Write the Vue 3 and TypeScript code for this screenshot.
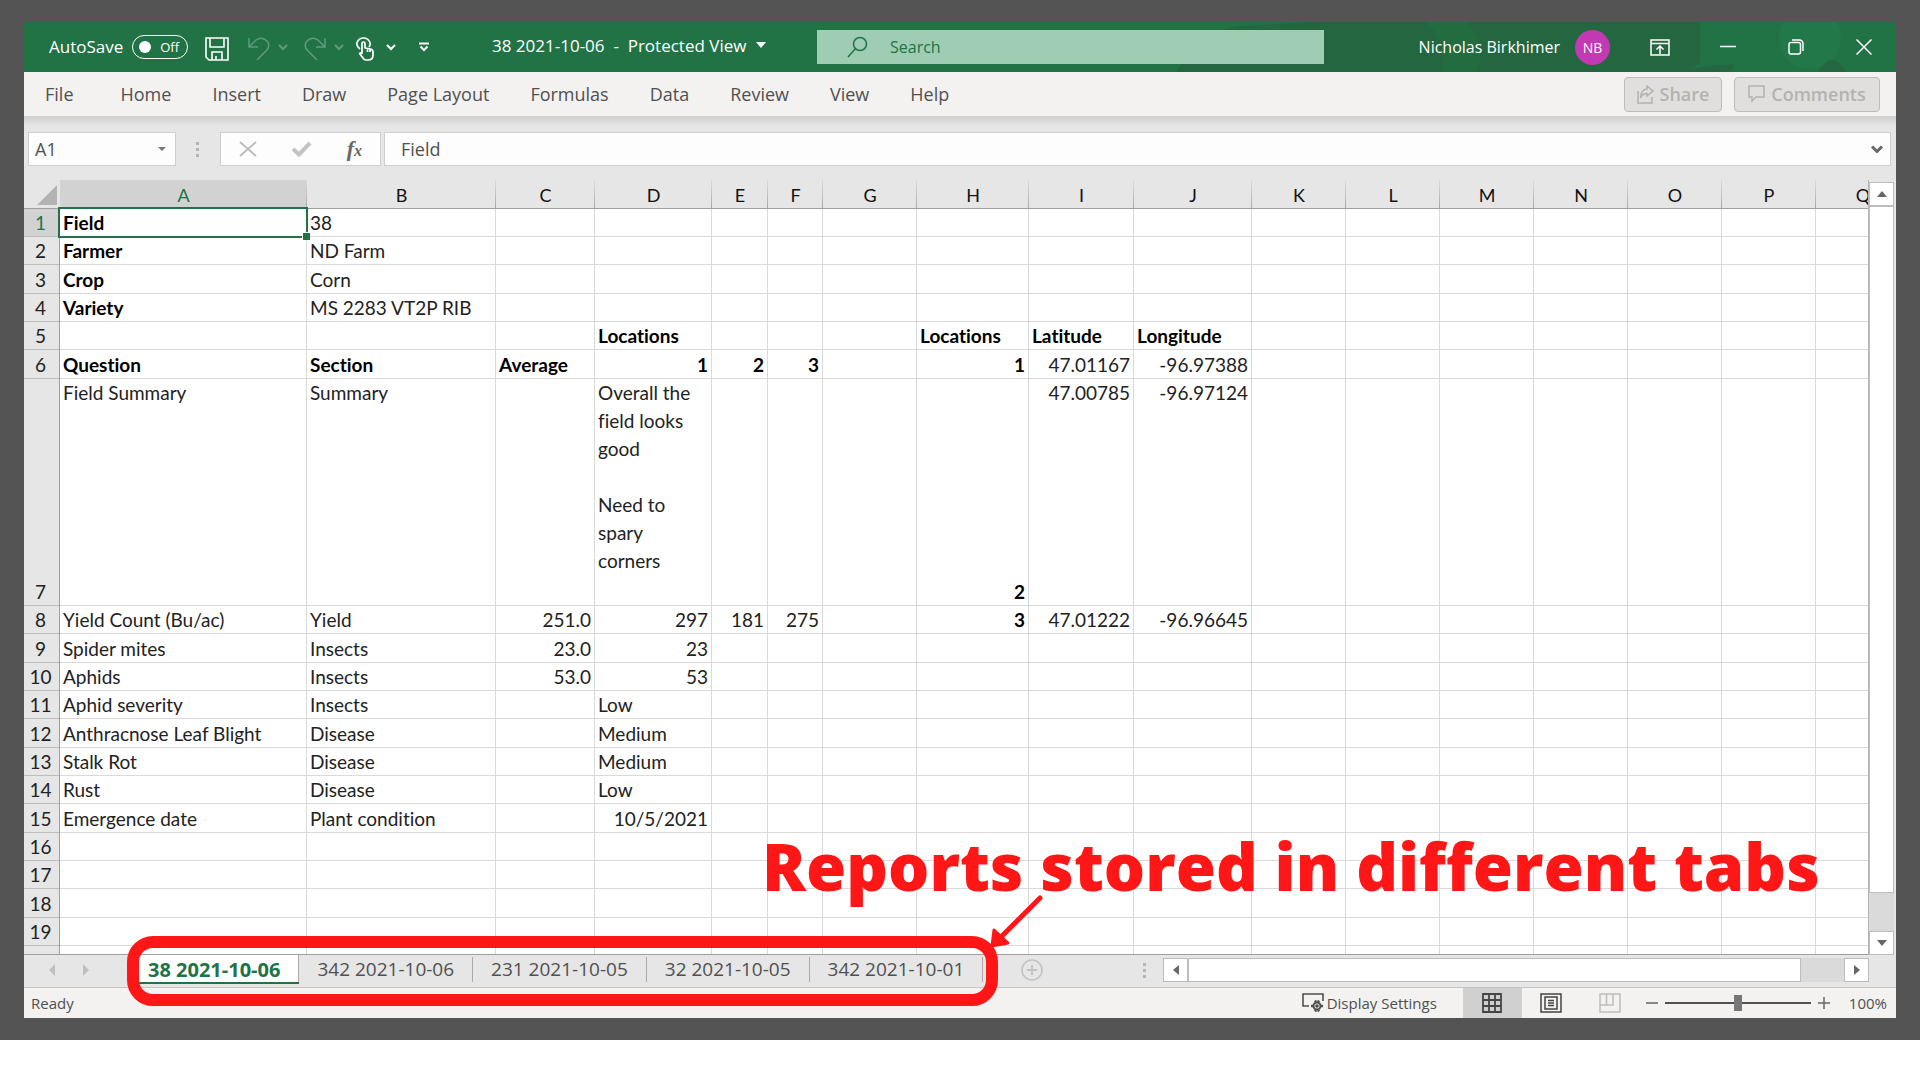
<script setup lang="ts">
import { ref } from 'vue'

interface Cell {
  text: string
  bold?: boolean
  right?: boolean
  bottom?: boolean
}

const columns = ['A', 'B', 'C', 'D', 'E', 'F', 'G', 'H', 'I', 'J', 'K', 'L', 'M', 'N', 'O', 'P', 'Q']
const widths = [247, 189, 99, 117, 56, 55, 94, 112, 105, 118, 94, 94, 94, 94, 94, 94, 94]

const t = (text: string): Cell => ({ text })
const b = (text: string): Cell => ({ text, bold: true })
const n = (text: string): Cell => ({ text, right: true })
const bn = (text: string): Cell => ({ text, bold: true, right: true })

const data: Record<number, Record<string, Cell>> = {
  1: { A: b('Field'), B: t('38') },
  2: { A: b('Farmer'), B: t('ND Farm') },
  3: { A: b('Crop'), B: t('Corn') },
  4: { A: b('Variety'), B: t('MS 2283 VT2P RIB') },
  5: { D: b('Locations'), H: b('Locations'), I: b('Latitude'), J: b('Longitude') },
  6: {
    A: b('Question'), B: b('Section'), C: b('Average'), D: bn('1'), E: bn('2'), F: bn('3'),
    H: bn('1'), I: n('47.01167'), J: n('-96.97388'),
  },
  7: {
    A: t('Field Summary'), B: t('Summary'),
    D: t('Overall the\nfield looks\ngood\n\nNeed to\nspary\ncorners'),
    H: { text: '2', bold: true, right: true, bottom: true },
    I: n('47.00785'), J: n('-96.97124'),
  },
  8: {
    A: t('Yield Count (Bu/ac)'), B: t('Yield'), C: n('251.0'), D: n('297'), E: n('181'), F: n('275'),
    H: bn('3'), I: n('47.01222'), J: n('-96.96645'),
  },
  9: { A: t('Spider mites'), B: t('Insects'), C: n('23.0'), D: n('23') },
  10: { A: t('Aphids'), B: t('Insects'), C: n('53.0'), D: n('53') },
  11: { A: t('Aphid severity'), B: t('Insects'), D: t('Low') },
  12: { A: t('Anthracnose Leaf Blight'), B: t('Disease'), D: t('Medium') },
  13: { A: t('Stalk Rot'), B: t('Disease'), D: t('Medium') },
  14: { A: t('Rust'), B: t('Disease'), D: t('Low') },
  15: { A: t('Emergence date'), B: t('Plant condition'), D: n('10/5/2021') },
}

const menu = ['File', 'Home', 'Insert', 'Draw', 'Page Layout', 'Formulas', 'Data', 'Review', 'View', 'Help']
const sheets = ['38 2021-10-06', '342 2021-10-06', '231 2021-10-05', '32 2021-10-05', '342 2021-10-01']

const activeSheet = ref(0)
const autoSave = ref(false)
const search = ref('')
const cellName = ref('A1')
const formula = ref('Field')
const zoom = ref(50)
</script>

<template>
  <div class="backdrop">
    <main class="window">
      <header class="titlebar">
        <svg class="pattern" viewBox="0 0 780 50" preserveAspectRatio="xMaxYMid slice" aria-hidden="true">
          <path d="M60 50Q70 32 90 22Q100 4 130 4L190 0H584V50Z" fill="#246640" />
          <path d="M310 0Q330 18 326 50H360Q372 30 352 0Z" fill="#22703f" opacity=".6" />
          <path d="M610 0Q606 30 570 50H780V0Z" fill="#217346" />
          <circle cx="694" cy="16" r="31" fill="#23784a" />
          <path d="M560 50Q585 44 617 42Q618 48 612 50ZM702 50Q716 26 730 50Z" fill="#246640" />
        </svg>

        <div class="quick">
          <label class="autosave">
            <span class="autosave-name">AutoSave</span>
            <input v-model="autoSave" type="checkbox" />
            <span class="switch"><i></i>Off</span>
          </label>
          <button type="button" class="save" aria-label="Save">
            <svg width="24" height="24" viewBox="0 0 24 24" fill="none" stroke="#fff" stroke-width="1.6">
              <path d="M1 1H23V23H4L1 20ZM5 1V10H19V1M7 23V15H17V23M11 19V23" />
            </svg>
          </button>
          <button type="button" class="undo dim" aria-label="Undo">
            <svg width="22" height="24" viewBox="0 0 22 24" fill="none" stroke="#fff" stroke-width="1.5">
              <path d="M1 1V10H10M1 10L8 3Q14 -1 19 4Q23 9 18 14L9 23" />
            </svg>
          </button>
          <button type="button" class="more dim" aria-label="Undo list">
            <svg width="12" height="8" viewBox="0 0 12 8" fill="none" stroke="#fff" stroke-width="2"><path d="M2 2L6 6L10 2" /></svg>
          </button>
          <button type="button" class="redo dim" aria-label="Redo">
            <svg width="22" height="24" viewBox="0 0 22 24" fill="none" stroke="#fff" stroke-width="1.5">
              <path d="M21 1V10H12M21 10L14 3Q8 -1 3 4Q-1 9 4 14L13 23" />
            </svg>
          </button>
          <button type="button" class="more dim" aria-label="Redo list">
            <svg width="12" height="8" viewBox="0 0 12 8" fill="none" stroke="#fff" stroke-width="2"><path d="M2 2L6 6L10 2" /></svg>
          </button>
          <button type="button" class="touch" aria-label="Touch mode">
            <svg width="18" height="24" viewBox="0 0 18 24" fill="none" stroke="#fff" stroke-width="1.7" stroke-linejoin="round">
              <path d="M4 12Q0 9 1 5.500Q3 1 7.500 1Q12 1 14 5.500Q14.500 8 13 10" />
              <path d="M6 17V6.500Q6 5 7.500 5Q9 5 9 6.500V11L14.500 12Q17 12.500 17 15V18Q17 23 12 23H10Q8 23 7 21L3.500 16.500Q5 15 6 17M11.500 11.500V15M14 12V15" />
            </svg>
          </button>
          <button type="button" class="more touch-more" aria-label="Touch mode list">
            <svg width="12" height="8" viewBox="0 0 12 8" fill="none" stroke="#fff" stroke-width="2"><path d="M2 2L6 6L10 2" /></svg>
          </button>
          <button type="button" class="customize" aria-label="Customize toolbar">
            <svg width="12" height="10" viewBox="0 0 12 10" fill="none" stroke="#fff" stroke-width="2"><path d="M1 1.500H11M2.500 4.500L6 8L9.500 4.500" /></svg>
          </button>
        </div>

        <button type="button" class="doc">
          <span>38 2021-10-06&nbsp; -&nbsp; Protected View</span>
          <svg width="10" height="6" viewBox="0 0 10 6" fill="#fff"><path d="M0 0H10L5 6Z" /></svg>
        </button>

        <label class="search">
          <svg width="21" height="22" viewBox="0 0 21 22" fill="none" stroke="#217346" stroke-width="1.5">
            <circle cx="13" cy="8" r="6.500" /><path d="M8.500 12.500L1 21" />
          </svg>
          <input v-model="search" type="text" placeholder="Search" aria-label="Search" />
        </label>

        <div class="account">
          <span class="user">Nicholas Birkhimer</span>
          <span class="avatar">NB</span>
          <button type="button" class="win" aria-label="Ribbon display options">
            <svg width="20" height="17" viewBox="0 0 20 17" fill="none" stroke="#fff" stroke-width="1.500"><path d="M1 1H19V16H1ZM1 4.500H19M10 15V7.500M6.500 10.500L10 7L13.500 10.500" /></svg>
          </button>
          <button type="button" class="win" aria-label="Minimize">
            <svg width="16" height="16" viewBox="0 0 16 16" fill="none" stroke="#fff" stroke-width="1.500"><path d="M0 7.500H16" /></svg>
          </button>
          <button type="button" class="win" aria-label="Restore">
            <svg width="16" height="16" viewBox="0 0 16 16" fill="none" stroke="#fff" stroke-width="1.500"><rect x="1" y="3.500" width="11.500" height="11.500" rx="2" /><path d="M4 1H11Q15 1 15 5V12" /></svg>
          </button>
          <button type="button" class="win" aria-label="Close">
            <svg width="16" height="16" viewBox="0 0 16 16" fill="none" stroke="#fff" stroke-width="1.500"><path d="M.5 .5L15.500 15.500M15.500 .5L.5 15.500" /></svg>
          </button>
        </div>
      </header>

      <nav class="ribbon">
        <button v-for="item in menu" :key="item" type="button" class="menu-item">{{ item }}</button>
        <button type="button" class="action share" disabled>
          <svg width="17" height="19" viewBox="0 0 17 19" fill="none" stroke="#b4b2b0" stroke-width="1.500"><path d="M1 6V18H15V12M10 1L16 6L10 11V8.500Q6 8 3.500 13Q4 4.500 10 4Z" /></svg>
          Share
        </button>
        <button type="button" class="action comments" disabled>
          <svg width="17" height="18" viewBox="0 0 17 18" fill="none" stroke="#b4b2b0" stroke-width="1.500"><path d="M1 1H16V12H8L4 16V12H1Z" /></svg>
          Comments
        </button>
      </nav>

      <section class="formula-row">
        <div class="name-box">
          <input v-model="cellName" type="text" aria-label="Name box" />
          <button type="button" aria-label="Named ranges"><svg width="8" height="4" viewBox="0 0 8 4" fill="#777"><path d="M0 0H8L4 4Z" /></svg></button>
        </div>
        <span class="dots"><i></i><i></i><i></i></span>
        <div class="fx-box">
          <button type="button" aria-label="Cancel"><svg width="18" height="16" viewBox="0 0 18 16" fill="none" stroke="#bdbdbd" stroke-width="2"><path d="M1 1L17 15M17 1L1 15" /></svg></button>
          <button type="button" aria-label="Enter"><svg width="20" height="16" viewBox="0 0 20 16" fill="none" stroke="#c4c4c4" stroke-width="4"><path d="M1 8L7 13.500L18 2" /></svg></button>
          <button type="button" class="fx" aria-label="Insert function">f<small>x</small></button>
        </div>
        <div class="formula">
          <input v-model="formula" type="text" aria-label="Formula" />
          <button type="button" aria-label="Expand formula bar"><svg width="12" height="9" viewBox="0 0 12 9" fill="none" stroke="#666" stroke-width="3"><path d="M1 1.500L6 6.500L11 1.500" /></svg></button>
        </div>
      </section>

      <section class="body">
        <div class="pane">
          <table class="grid">
            <colgroup>
              <col class="corner-col" />
              <col v-for="(w, i) in widths" :key="i" :style="{ width: w + 'px' }" />
            </colgroup>
            <thead>
              <tr>
                <td class="corner"><svg width="20" height="20" viewBox="0 0 20 20" fill="#b3b3b3"><path d="M20 0V20H0Z" /></svg></td>
                <th v-for="c in columns" :key="c" scope="col" :class="{ on: c === 'A' }">{{ c }}</th>
              </tr>
            </thead>
            <tbody>
              <tr v-for="r in 19" :key="r" :class="{ summary: r === 7 }">
                <th scope="row" :class="{ on: r === 1 }">{{ r }}</th>
                <td
                  v-for="c in columns"
                  :key="c"
                  :class="{
                    bold: data[r]?.[c]?.bold,
                    right: data[r]?.[c]?.right,
                    bottom: data[r]?.[c]?.bottom,
                    selected: r === 1 && c === 'A',
                  }"
                >{{ data[r]?.[c]?.text }}</td>
              </tr>
              <tr class="partial">
                <th></th>
                <td v-for="c in columns" :key="c"></td>
              </tr>
            </tbody>
          </table>
          <p class="callout">Reports stored in different tabs</p>
          <svg class="arrow" width="56" height="56" viewBox="0 0 56 56" aria-hidden="true">
            <path d="M51 5L12 44" stroke="#ff1616" stroke-width="5" stroke-linecap="round" />
            <path d="M3 53L5 37L19 50Z" fill="#ff1616" stroke="#ff1616" stroke-width="3" stroke-linejoin="round" />
          </svg>
        </div>
        <div class="vscroll">
          <button type="button" aria-label="Scroll up"><svg width="10" height="6" viewBox="0 0 10 6" fill="#666"><path d="M0 6H10L5 0Z" /></svg></button>
          <span class="thumb"></span>
          <span class="track"></span>
          <button type="button" aria-label="Scroll down"><svg width="10" height="6" viewBox="0 0 10 6" fill="#666"><path d="M0 0H10L5 6Z" /></svg></button>
        </div>
      </section>

      <section class="sheet-bar">
        <button type="button" class="step" aria-label="Previous sheet"><svg width="6" height="12" viewBox="0 0 6 12" fill="#bfbfbf"><path d="M6 0V12L0 6Z" /></svg></button>
        <button type="button" class="step" aria-label="Next sheet"><svg width="6" height="12" viewBox="0 0 6 12" fill="#bfbfbf"><path d="M0 0V12L6 6Z" /></svg></button>
        <div class="tabs">
          <button
            v-for="(s, i) in sheets"
            :key="s"
            type="button"
            class="tab"
            :class="{ active: i === activeSheet }"
            @click="activeSheet = i"
          ><span>{{ s }}</span></button>
        </div>
        <button type="button" class="add" aria-label="New sheet">
          <svg width="22" height="22" viewBox="0 0 22 22" fill="none" stroke="#c2c2c2" stroke-width="1.500"><circle cx="11" cy="11" r="10" /><path d="M6 11H16M11 6V16" stroke-width="2" /></svg>
        </button>
        <span class="dots"><i></i><i></i><i></i></span>
        <div class="hscroll">
          <button type="button" aria-label="Scroll left"><svg width="6" height="10" viewBox="0 0 6 10" fill="#666"><path d="M6 0V10L0 5Z" /></svg></button>
          <span class="thumb"></span>
          <span class="track"></span>
          <button type="button" aria-label="Scroll right"><svg width="6" height="10" viewBox="0 0 6 10" fill="#666"><path d="M0 0V10L6 5Z" /></svg></button>
        </div>
      </section>

      <footer class="status">
        <span class="ready">Ready</span>
        <button type="button" class="display">
          <svg width="22" height="20" viewBox="0 0 22 20" fill="none" stroke="#505050" stroke-width="1.600">
            <path d="M7 13H1V1H21V8" />
            <circle cx="15" cy="13" r="3.500" stroke-width="2" /><circle cx="15" cy="13" r="1" fill="#505050" />
            <path d="M13 7.500L14 9M17 7.500L16 9M13 18.500L14 17M17 18.500L16 17M9 13H11.500M18.500 13H21" stroke-width="2.400" />
          </svg>
          Display Settings
        </button>
        <button type="button" class="view current" aria-label="Normal view">
          <svg width="20" height="20" viewBox="0 0 20 20" fill="none" stroke="#444" stroke-width="1.800"><path d="M1 1H19V19H1ZM1 7H19M1 13H19M7 1V19M13 1V19" /></svg>
        </button>
        <button type="button" class="view" aria-label="Page layout view">
          <svg width="22" height="20" viewBox="0 0 22 20" fill="none" stroke="#444" stroke-width="1.500"><path d="M1 1H21V19H1ZM5 4H17V16H5ZM8 7.500H14M8 10H14M8 12.500H14" /></svg>
        </button>
        <button type="button" class="view" aria-label="Page break view">
          <svg width="22" height="20" viewBox="0 0 22 20" fill="none" stroke="#bdbdbd" stroke-width="1.500"><path d="M1 1H21V19H1ZM1 12H14V1M7.500 1V12" /></svg>
        </button>
        <div class="zoom">
          <button type="button" aria-label="Zoom out"><svg width="12" height="12" viewBox="0 0 12 12" stroke="#666" stroke-width="1.500"><path d="M0 6H12" /></svg></button>
          <input v-model="zoom" type="range" min="0" max="100" aria-label="Zoom" />
          <button type="button" aria-label="Zoom in"><svg width="12" height="12" viewBox="0 0 12 12" stroke="#666" stroke-width="1.500"><path d="M0 6H12M6 0V12" /></svg></button>
        </div>
        <span class="percent">100%</span>
      </footer>
    </main>
  </div>
</template>

<style>
body {
  margin: 0;
  background: #fff;
}
</style>

<style scoped>
.backdrop {
  padding: 22px 24px;
  background: #545454;
  font-family: 'Open Sans', 'Noto Sans', sans-serif;
  font-size: 18px;
  font-variant-ligatures: none;
  color: #505050;
}
* {
  box-sizing: border-box;
}
button,
input {
  margin: 0;
  padding: 0;
  border: 0;
  background: none;
  font: inherit;
  color: inherit;
  min-width: 0;
}
input:focus {
  outline: none;
}
button {
  display: flex;
  align-items: center;
  justify-content: center;
  white-space: nowrap;
}
svg {
  display: block;
  flex: none;
}
.window {
  background: #e6e6e6;
}

/* Title bar */
.titlebar {
  position: relative;
  display: grid;
  grid-template-columns: 468px 325px minmax(0, 507px) minmax(0, 1fr);
  align-items: center;
  height: 50px;
  overflow: hidden;
  background: #217346;
  color: #fff;
  font-size: 16px;
}
.pattern {
  position: absolute;
  top: 0;
  right: 0;
  width: 780px;
  height: 50px;
}
.quick,
.doc,
.search,
.account {
  position: relative;
}
.quick {
  display: flex;
  align-items: center;
  padding-left: 25px;
}
.autosave {
  display: flex;
  align-items: center;
}
.autosave-name {
  width: 83px;
  padding-bottom: 2px;
  font-size: 17px;
}
.autosave input {
  position: absolute;
  opacity: 0;
}
.switch {
  display: flex;
  align-items: center;
  justify-content: space-between;
  width: 56px;
  height: 24px;
  padding: 0 8px 0 6px;
  border: 1px solid #fff;
  border-radius: 12px;
  font-size: 13px;
}
.switch i {
  width: 12px;
  height: 12px;
  border-radius: 50%;
  background: #fff;
}
.save,
.undo,
.redo,
.touch {
  padding-top: 4px;
}
.save {
  margin-left: 17px;
}
.undo {
  margin-left: 19px;
}
.more {
  margin-left: 7px;
}
.redo {
  margin-left: 15px;
}
.dim {
  opacity: .28;
}
.touch,
.touch-more {
  margin-left: 11px;
}
.customize {
  margin-left: 21px;
}
.doc {
  justify-content: flex-start;
  gap: 10px;
  padding-bottom: 4px;
  font-size: 17px;
}
.search {
  display: flex;
  align-items: center;
  gap: 22px;
  height: 34px;
  padding-left: 30px;
  background: #9fcdb3;
}
.search input {
  flex: 1;
  color: #217346;
}
.search input::placeholder {
  color: #217346;
  opacity: 1;
}
.account {
  display: flex;
  align-items: center;
  justify-content: flex-end;
  white-space: nowrap;
}
.avatar {
  width: 35px;
  height: 35px;
  margin: 0 14px 0 15px;
  border-radius: 50%;
  background: #c239b3;
  font-size: 14px;
  line-height: 35px;
  text-align: center;
}
.win {
  flex: none;
  width: 68px;
  height: 50px;
  padding-left: 4px;
}

/* Ribbon tabs */
.ribbon {
  display: flex;
  align-items: center;
  gap: 41px;
  height: 44px;
  padding: 0 16px 0 21px;
  background: #f3f2f1;
}
.menu-item:first-child {
  margin-right: 6px;
}
.action {
  gap: 6px;
  height: 35px;
  border: 1px solid #bebcba;
  border-radius: 4px;
  background: #e1dfdd;
  color: #b4b2b0;
  font-weight: 600;
}
.share {
  width: 98px;
  margin-left: auto;
}
.comments {
  width: 146px;
  margin-left: -29px;
}

/* Formula bar */
.formula-row {
  display: flex;
  align-items: center;
  height: 64px;
  padding: 2px 5px 0 4px;
  background: linear-gradient(#cfcfcf, #e6e6e6 10px);
}
.name-box,
.fx-box,
.formula {
  display: flex;
  align-items: center;
  height: 34px;
  border: 1px solid #cfcfcf;
  background: #fdfdfd;
}
.name-box {
  width: 148px;
  padding: 0 9px 0 6px;
}
.name-box input,
.formula input {
  flex: 1;
}
.dots {
  display: flex;
  flex-direction: column;
  gap: 3px;
  width: 3px;
}
.dots i {
  height: 3px;
  background: #b5b5b5;
}
.formula-row .dots {
  margin: 0 21px 0 20px;
}
.fx-box {
  justify-content: space-between;
  width: 161px;
  padding: 0 18px;
  margin-right: 3px;
}
.fx {
  align-items: baseline;
  font-family: 'Liberation Serif', serif;
  font-style: italic;
  font-weight: 700;
  font-size: 22px;
  color: #666;
}
.fx small {
  font-size: 16px;
}
.formula {
  flex: 1;
  padding: 0 7px 0 16px;
}

/* Worksheet */
.body {
  display: flex;
}
.pane {
  position: relative;
  flex: 1;
  min-width: 0;
  overflow: hidden;
  border-bottom: 1px solid #9f9f9f;
}
.grid {
  width: 1886px;
  table-layout: fixed;
  border-collapse: separate;
  border-spacing: 0;
  font-family: Lato, 'Open Sans', sans-serif;
  font-size: 19px;
  line-height: 28px;
  color: #222;
}
.corner-col {
  width: 36px;
}
.grid th,
.grid td {
  padding: 0;
  font-weight: 400;
}
.grid thead th,
.grid .corner {
  height: 29px;
  border-bottom: 1px solid #9f9f9f;
  color: #111;
}
.grid thead th {
  padding-top: 3px;
  background: linear-gradient(#dcdcdc, #a8a8a8) right / 1px 100% no-repeat;
  font-size: 18px;
  line-height: 25px;
}
.grid thead .on {
  background-color: #d2d2d2;
  color: #217346;
}
.grid .corner {
  padding: 0 3px 3px 0;
  line-height: 20px;
  vertical-align: bottom;
}
.corner svg {
  margin-left: auto;
}
.grid tbody tr {
  height: 28px;
}
.grid tbody tr:nth-child(3n) {
  height: 29px;
}
.grid tbody .summary {
  height: 227px;
}
.grid tbody th {
  padding-right: 3px;
  box-shadow: inset -1px 0 #9f9f9f, inset 0 -1px #bdbdbd;
  vertical-align: bottom;
}
.grid tbody .on {
  background: #d2d2d2;
  color: #217346;
}
.grid tbody td {
  padding: 0 4px 0 3px;
  background: #fff;
  box-shadow: inset -1px -1px #dadada;
  vertical-align: bottom;
  white-space: pre;
}
.grid tbody .summary td {
  vertical-align: top;
}
.grid tbody .bold {
  font-weight: 700;
  color: #000;
}
.grid tbody .right {
  text-align: right;
}
.grid tbody .summary .bottom {
  vertical-align: bottom;
}
.grid tbody .selected {
  position: relative;
}
.selected::before {
  content: '';
  position: absolute;
  inset: -2px -1px -1px -2px;
  border: 2px solid #217346;
}
.selected::after {
  content: '';
  position: absolute;
  right: -3px;
  bottom: -3px;
  width: 7px;
  height: 7px;
  border: 1px solid #fff;
  border-width: 1px 0 0 1px;
  background: #217346;
}
.grid tbody .partial {
  height: 8px;
}
.grid .partial th {
  box-shadow: inset -1px 0 #9f9f9f;
}
.grid .partial td {
  box-shadow: inset -1px 0 #dadada;
}
.callout {
  position: absolute;
  left: 738px;
  bottom: 46px;
  margin: 0;
  color: #ff1616;
  font-weight: 800;
  font-size: 65px;
  line-height: 84px;
  white-space: nowrap;
}
.arrow {
  position: absolute;
  left: 965px;
  bottom: 5px;
}
.vscroll {
  display: flex;
  flex-direction: column;
  width: 28px;
  padding: 2px 2px 0 0;
  border-left: 1px solid #b5b5b5;
  background: #e6e6e6;
}
.vscroll button,
.hscroll button {
  flex: none;
  width: 25px;
  height: 24px;
  border: 1px solid #bdbdbd;
  background: #fff;
}
.thumb {
  border: 1px solid #bdbdbd;
  background: #fff;
}
.track {
  background: #dadada;
}
.vscroll .thumb {
  flex: 1;
}
.vscroll .track {
  height: 38px;
}

/* Sheet tabs */
.sheet-bar {
  display: flex;
  align-items: center;
  height: 32px;
  padding: 0 27px 2px 0;
}
.step {
  width: 34px;
  height: 30px;
  padding-left: 21px;
}
.tabs {
  position: relative;
  display: flex;
  align-self: stretch;
  margin-left: 47px;
}
.tabs::after {
  content: '';
  position: absolute;
  inset: -19px -15px -21px -12px;
  border: 12px solid #ff1616;
  border-radius: 26px;
  pointer-events: none;
}
.tab {
  align-items: flex-start;
  padding-top: 2px;
  font-size: 19px;
}
.tab span {
  padding: 0 18px;
  line-height: 25px;
  border-right: 1px solid #aaa;
}
.tab.active {
  height: 29px;
  padding-top: 0;
  background: #fff;
  border-bottom: 2px solid #217346;
  color: #217346;
  font-weight: 700;
  font-size: 20px;
}
.tab.active span {
  padding: 2px 18px 0 9px;
}
.add {
  margin-left: 38px;
}
.sheet-bar .dots {
  margin: 0 17px 0 auto;
}
.hscroll {
  display: flex;
  flex: 0 1 706px;
}
.hscroll .thumb {
  flex: 1;
}
.hscroll .track {
  width: 43px;
}

/* Status bar */
.status {
  display: flex;
  align-items: center;
  height: 31px;
  padding: 0 9px 0 7px;
  border-top: 1px solid #c6c6c6;
  background: #f3f2f1;
  font-size: 15px;
}
.display {
  gap: 3px;
  margin-left: auto;
}
.view {
  width: 59px;
  height: 30px;
}
.current {
  margin-left: 26px;
  background: #d0d0d0;
}
.zoom {
  display: flex;
  align-items: center;
  gap: 7px;
  margin-left: 6px;
}
.zoom input {
  appearance: none;
  width: 146px;
  height: 16px;
  background: linear-gradient(#505050, #505050) center / 100% 2px no-repeat;
}
.zoom input::-webkit-slider-thumb {
  appearance: none;
  width: 8px;
  height: 16px;
  background: #777;
}
.percent {
  margin-left: 19px;
}
</style>
